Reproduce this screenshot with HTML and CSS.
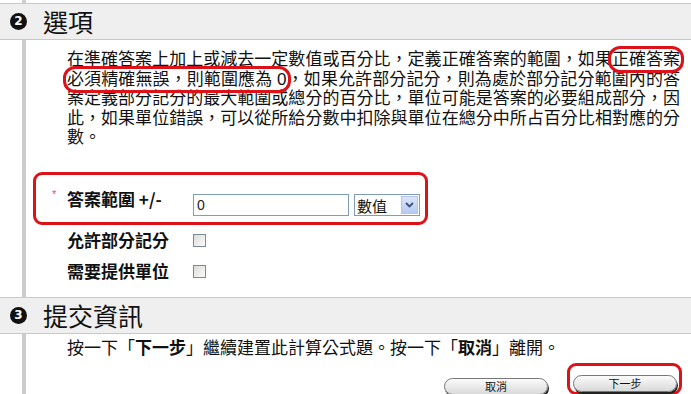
FILE: index.html
```html
<!DOCTYPE html>
<html lang="zh-Hant">
<head>
    <meta charset="UTF-8">
    <meta name="viewport" content="width=device-width, initial-scale=1.0">
    <title>計算公式題 - 選項</title>
    <link rel="stylesheet" href="styles.css">
</head>
<body>
    <div class="step-stub"></div>

    <div class="step-head">
        <span class="step-num">2</span>
        <h2>選項</h2>
    </div>
    <div class="step-body">
        <p class="step-text">在準確答案上加上或減去一定數值或百分比，定義正確答案的範圍，如果<span class="mark">正確答案</span><span class="mark">必須精確無誤，則範圍應為 0</span>，如果允許部分記分，則為處於部分記分範圍內的答案定義部分記分的最大範圍或總分的百分比，單位可能是答案的必要組成部分，因此，如果單位錯誤，可以從所給分數中扣除與單位在總分中所占百分比相對應的分數。</p>

        <div class="fields">
            <div class="field field-required">
                <span class="req">*</span>
                <label class="field-label" for="range">答案範圍 +/-</label>
                <input class="text-input" id="range" type="text" value="0">
                <span class="select-wrap">
                    <select class="select">
                        <option>數值</option>
                        <option>百分比</option>
                    </select>
                    <span class="select-btn">
                        <svg width="9" height="6" viewBox="0 0 9 6"><path d="M1 1 L4.5 4.5 L8 1" fill="none" stroke="#3c4f7a" stroke-width="1.8"/></svg>
                    </span>
                </span>
            </div>
            <div class="field">
                <label class="field-label" for="partial">允許部分記分</label>
                <input class="check" id="partial" type="checkbox">
            </div>
            <div class="field">
                <label class="field-label" for="units">需要提供單位</label>
                <input class="check" id="units" type="checkbox">
            </div>
        </div>
    </div>

    <div class="step-head">
        <span class="step-num">3</span>
        <h2>提交資訊</h2>
    </div>
    <div class="step-body step-body-last">
        <p class="step-text">按一下「<strong>下一步</strong>」繼續建置此計算公式題。按一下「<strong>取消</strong>」離開。</p>
        <div class="actions">
            <button class="btn" type="button">取消</button>
            <span class="mark-box">
                <button class="btn" type="button">下一步</button>
            </span>
        </div>
    </div>
</body>
</html>
```

FILE: styles.css
```css
/* General Styles */
body {
    margin: 0;
    font-family: "Liberation Sans", "Noto Sans CJK TC", sans-serif;
    color: #111;
    background: #fff;
    overflow: hidden;
}

.step-stub {
    height: 3px;
    margin-left: 22px;
    border-left: 4px solid #cdcdcd;
}

/* Step headers */
.step-head {
    display: flex;
    align-items: center;
    height: 35px;
    padding-left: 10px;
    background-color: #efefef;
    border-top: 1px solid #c9c9c9;
    border-bottom: 1px solid #c9c9c9;
}

.step-num {
    flex-shrink: 0;
    width: 17px;
    height: 17px;
    border-radius: 50%;
    background-color: #111;
    color: #fff;
    font-family: "DejaVu Sans", sans-serif;
    font-size: 12px;
    font-weight: bold;
    line-height: 17px;
    text-align: center;
}

.step-head h2 {
    margin: 0 0 0 16px;
    font-family: "Noto Sans CJK TC", sans-serif;
    font-size: 25px;
    font-weight: normal;
    line-height: 1;
}

/* Step bodies */
.step-body {
    margin-left: 22px;
    border-left: 4px solid #cdcdcd;
    padding: 10px 9px 10px 41px;
}

.step-body-last {
    padding-top: 5px;
    padding-bottom: 0;
}

.step-text {
    margin: 0 2px 0 0;
    font-size: 17px;
    line-height: 19.5px;
    text-align: justify;
}

.step-text strong {
    font-weight: bold;
}

/* Red annotation marks */
.mark {
    outline: 3px solid #dd1118;
    outline-offset: 1px;
    border-radius: 8px;
}

.mark-box {
    display: inline-flex;
    padding: 9px 2px 0 3px;
    border: 3px solid #dd1118;
    border-radius: 9px;
}

/* Form fields */
.fields {
    margin-top: 24px;
}

.field {
    display: flex;
    align-items: center;
    height: 31px;
}

.field-label {
    width: 126px;
    flex-shrink: 0;
    font-family: "Noto Sans CJK TC", sans-serif;
    font-size: 17px;
    font-weight: bold;
    line-height: 20px;
}

.field-required {
    box-sizing: border-box;
    width: 395px;
    height: 53px;
    margin-left: -34px;
    padding: 19px 5px 6px 16px;
    align-items: flex-end;
    border: 3px solid #dd1118;
    border-radius: 9px;
}

.field-required .field-label {
    margin-bottom: 7px;
}

.req {
    align-self: flex-start;
    width: 15px;
    margin-top: -6px;
    font-size: 11px;
    color: #e0505a;
}

.text-input {
    box-sizing: border-box;
    width: 156px;
    height: 22px;
    margin: 0 5px 0 0;
    padding: 0 3px;
    border: 1px solid #7f9db9;
    font-family: "Liberation Sans", sans-serif;
    font-size: 14px;
    color: #222;
}

.select-wrap {
    position: relative;
    display: inline-block;
}

.select {
    box-sizing: border-box;
    width: 66px;
    height: 22px;
    padding: 0 0 0 2px;
    border: 1px solid #7f9db9;
    border-radius: 0;
    background: #fff;
    font-family: "Noto Sans CJK TC", sans-serif;
    font-size: 15px;
    color: #111;
    appearance: none;
    display: block;
}

.select-btn {
    position: absolute;
    top: 2px;
    right: 2px;
    width: 17px;
    height: 18px;
    display: flex;
    align-items: center;
    justify-content: center;
    background: linear-gradient(#dbe5fb, #b7c9f3);
    border: 1px solid #b3c4ec;
    box-sizing: border-box;
    pointer-events: none;
}

.check {
    appearance: none;
    width: 13px;
    height: 13px;
    margin: 1px 0 0 0;
    border: 1px solid #7a8a99;
    background: linear-gradient(135deg, #dcdcd6, #fbfbfb);
}

/* Buttons */
.actions {
    display: flex;
    justify-content: flex-end;
    align-items: flex-end;
    gap: 19px;
    margin-top: 5px;
}

.btn {
    box-sizing: border-box;
    width: 104px;
    height: 17px;
    padding: 0;
    border: 1px solid #777;
    border-radius: 9px;
    background: linear-gradient(#fbfbfb, #d9d9d9);
    box-shadow: 1px 2px 0 #222;
    font-family: "Noto Sans CJK TC", sans-serif;
    font-size: 11px;
    line-height: 15px;
    color: #111;
    cursor: pointer;
}
```
